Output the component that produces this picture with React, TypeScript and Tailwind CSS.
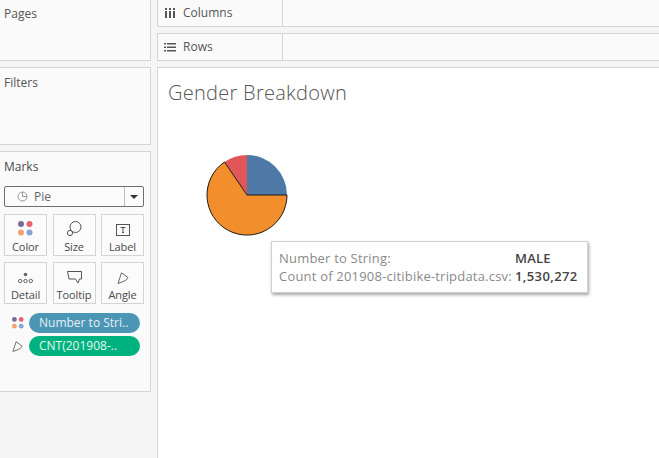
import React from 'react';

const font = { fontFamily: '"Open Sans", sans-serif' };

const MarkCard = ({ label, icon }: { label: string; icon: React.ReactNode }) => (
  <div className="h-[42px] border border-[#d4d4d4] flex flex-col items-center bg-[#fbfbfb]">
    <div className="h-[21px] flex items-end justify-center">{icon}</div>
    <span className="text-[11px] leading-[14px] mt-[4px] text-[#4a4a4a] tracking-[-0.1px]">{label}</span>
  </div>
);

const Dots = ({ size = 15 }: { size?: number }) => (
  <svg width={size} height={size} viewBox="0 0 15 15">
    <circle cx="3" cy="3" r="3" fill="#7b6a9b" />
    <circle cx="11.5" cy="3" r="3" fill="#e9636f" />
    <circle cx="3" cy="11.5" r="3" fill="#f2a36b" />
    <circle cx="11.5" cy="11.5" r="3" fill="#84a5d0" />
  </svg>
);

const AngleIcon = ({ size = 12 }: { size?: number }) => (
  <svg width={size} height={size} viewBox="0 0 12 12" fill="none" stroke="#666" strokeWidth="1">
    <path d="M4.5 0.8 L11 5.5 Q9.5 8.5 7 9.2 L1 11.5 Z" />
  </svg>
);

const App: React.FC = () => {
  return (
    <div className="w-[659px] h-[458px] overflow-hidden bg-[#f5f5f5] flex text-[#555]" style={font}>
      {/* Left cards */}
      <div className="w-[151px] shrink-0 flex flex-col gap-[6px]">
        <div className="h-[61px] bg-[#fafafa] border-r border-b border-[#d4d4d4] pl-[4px] pt-[6px] text-[12px] leading-[16px]">Pages</div>
        <div className="h-[78px] bg-[#fafafa] border-r border-y border-[#d4d4d4] pl-[4px] pt-[7px] text-[12px] leading-[16px]">Filters</div>
        <div className="h-[241px] bg-[#fafafa] border-r border-y border-[#d4d4d4] pl-[4px] pr-[6px] pt-[7px]">
          <div className="text-[12px] leading-[16px] text-[#4a4a4a]">Marks</div>
          <div className="mt-[11px] h-[21px] border border-[#6e6e6e] rounded-[2px] flex items-center bg-[#fbfbfb]">
            <svg className="ml-[12px]" width="11" height="11" viewBox="0 0 11 11" fill="none" stroke="#999" strokeWidth="1">
              <circle cx="5.5" cy="5.5" r="4.5" />
              <path d="M5.5 1 V5.5 H10" />
            </svg>
            <span className="ml-[6px] text-[12px] leading-none text-[#666]">Pie</span>
            <div className="ml-auto w-[19px] h-full border-l border-[#bbb] flex items-center justify-center">
              <div className="w-0 h-0 border-x-[4px] border-x-transparent border-t-[4px] border-t-[#333]" />
            </div>
          </div>
          <div className="mt-[7px] grid grid-cols-[43px_43px_43px] justify-between gap-y-[6px]">
            <MarkCard label="Color" icon={<Dots />} />
            <MarkCard
              label="Size"
              icon={
                <svg width="15" height="15" viewBox="0 0 15 15" fill="none" stroke="#555" strokeWidth="1">
                  <circle cx="8.5" cy="6" r="5.5" fill="#fbfbfb" />
                  <circle cx="3" cy="12" r="2.6" fill="#fbfbfb" />
                </svg>
              }
            />
            <MarkCard
              label="Label"
              icon={
                <svg width="14" height="12" viewBox="0 0 14 12" fill="none" stroke="#555" strokeWidth="1">
                  <rect x="0.5" y="0.5" width="13" height="11" />
                  <path d="M4.5 3.5 H9.5 M7 3.5 V8.5 M6 8.5 H8" />
                </svg>
              }
            />
            <MarkCard
              label="Detail"
              icon={
                <svg width="15" height="13" viewBox="0 0 15 13" fill="none" stroke="#666" strokeWidth="1">
                  <circle cx="7.5" cy="3.5" r="1.8" fill="#666" stroke="none" />
                  <circle cx="2.2" cy="10" r="1.7" />
                  <circle cx="7.5" cy="10" r="1.7" />
                  <circle cx="12.8" cy="10" r="1.7" />
                </svg>
              }
            />
            <MarkCard
              label="Tooltip"
              icon={
                <svg width="15" height="13" viewBox="0 0 15 13" fill="none" stroke="#555" strokeWidth="1">
                  <path d="M0.5 0.5 H14.5 V8 H12.5 L11 12 L8.5 8 H2 L0.5 0.5 Z" />
                </svg>
              }
            />
            <MarkCard label="Angle" icon={<AngleIcon />} />
          </div>
          <div className="mt-[9px] flex items-center h-[20px]">
            <div className="w-[25px] pl-[8px]"><Dots size={12} /></div>
            <div className="w-[111px] h-[20px] rounded-full bg-[#4c96b5] text-[#e4eff4] text-[12px] leading-[20px] pl-[10px]">Number to Stri..</div>
          </div>
          <div className="mt-[3px] flex items-center h-[20px]">
            <div className="w-[25px] pl-[8px]"><AngleIcon size={11} /></div>
            <div className="w-[111px] h-[20px] rounded-full bg-[#00b27f] text-[#e6f7f1] text-[12px] leading-[20px] pl-[10px]">CNT(201908-..</div>
          </div>
        </div>
      </div>

      {/* Right side */}
      <div className="ml-[6px] flex-1 flex flex-col">
        <div className="h-[27px] bg-[#fafafa] border-l border-b border-[#d4d4d4] flex">
          <div className="w-[125px] border-r border-[#d4d4d4] flex items-center pl-[7px] text-[12px]">
            <svg width="11" height="10" viewBox="0 0 11 10" fill="#555">
              <rect x="0" y="3" width="2" height="7" /><rect x="4" y="3" width="2" height="7" /><rect x="8" y="3" width="2" height="7" />
              <rect x="0" y="0" width="2" height="2" /><rect x="4" y="0" width="2" height="2" /><rect x="8" y="0" width="2" height="2" />
            </svg>
            <span className="ml-[7px]">Columns</span>
          </div>
        </div>
        <div className="mt-[6px] h-[28px] bg-[#fafafa] border-l border-y border-[#d4d4d4] flex">
          <div className="w-[125px] border-r border-[#d4d4d4] flex items-center pl-[6px] text-[12px]">
            <svg width="12" height="9" viewBox="0 0 12 9" fill="#555">
              <rect x="0" y="0" width="2" height="1.5" /><rect x="3" y="0" width="9" height="1.5" />
              <rect x="0" y="3.5" width="2" height="1.5" /><rect x="3" y="3.5" width="9" height="1.5" />
              <rect x="0" y="7" width="2" height="1.5" /><rect x="3" y="7" width="9" height="1.5" />
            </svg>
            <span className="ml-[7px]">Rows</span>
          </div>
        </div>
        <div className="relative mt-[6px] flex-1 bg-white border-l border-t border-[#d4d4d4] pl-[10px] pt-[11px]">
          <div className="text-[20px] leading-[27px] text-[#555] font-light tracking-[0.28px]">Gender Breakdown</div>
          <svg className="ml-[38px] mt-[48px]" width="82" height="82" viewBox="0 0 82 82">
            <path d="M41 41 L41 1 A40 40 0 0 1 81 41 Z" fill="#4e79a7" />
            <path d="M41 41 L41 1 A40 40 0 0 0 18.5 8 Z" fill="#e15759" />
            <path d="M41 41 L81 41 A40 40 0 1 1 18.5 8 Z" fill="#f28e2b" stroke="#1a1a1a" strokeWidth="1" />
          </svg>
          <div className="absolute left-[113px] top-[173px] w-[317px] h-[52px] bg-white border border-[#d0d0d0] shadow-[1px_2px_3px_rgba(0,0,0,0.35)] pl-[7px] pt-[7px] text-[13px] leading-[18px] text-[#8a8a8a] whitespace-nowrap tracking-[0.2px]">
            <div className="flex"><span className="w-[236px]">Number to String:</span><span className="text-[#444] font-semibold">MALE</span></div>
            <div className="flex"><span className="w-[236px]">Count of 201908-citibike-tripdata.csv:</span><span className="text-[#444] font-semibold tracking-[0.4px]">1,530,272</span></div>
          </div>
        </div>
      </div>
    </div>
  );
};

export default App;
